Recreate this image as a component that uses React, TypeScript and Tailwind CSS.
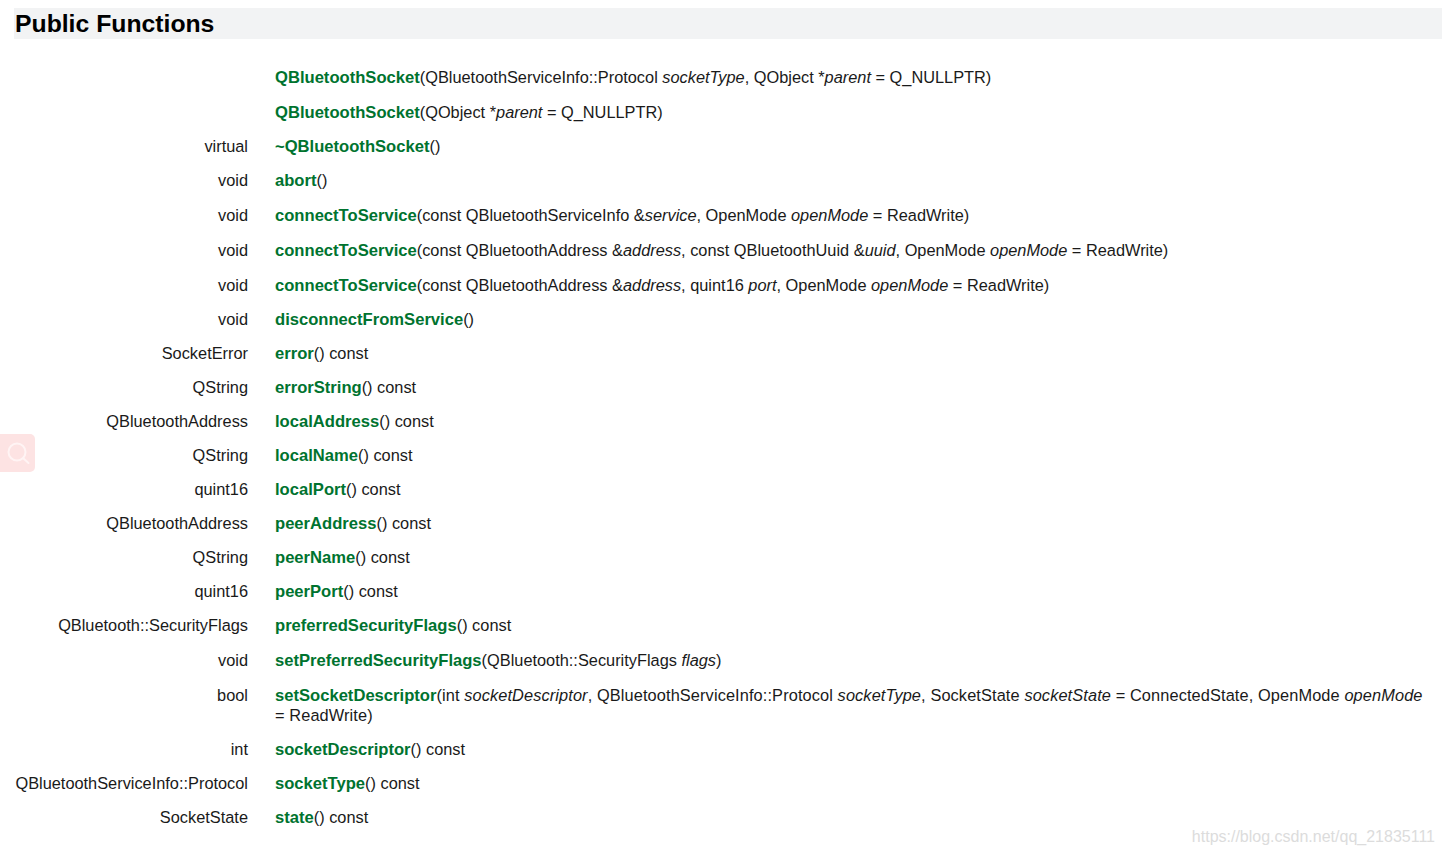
import React from 'react'

type Row = { type?: string; name: string; rest: React.ReactNode; tall?: boolean; wide?: boolean }

const rows: Row[] = [
  { name: 'QBluetoothSocket', tall: true, rest: <>(QBluetoothServiceInfo::Protocol <i>socketType</i>, QObject *<i>parent</i> = Q_NULLPTR)</> },
  { name: 'QBluetoothSocket', rest: <>(QObject *<i>parent</i> = Q_NULLPTR)</> },
  { type: 'virtual', name: '~QBluetoothSocket', rest: '()' },
  { type: 'void', name: 'abort', tall: true, rest: '()' },
  { type: 'void', name: 'connectToService', tall: true, rest: <>(const QBluetoothServiceInfo &amp;<i>service</i>, OpenMode <i>openMode</i> = ReadWrite)</> },
  { type: 'void', name: 'connectToService', tall: true, rest: <>(const QBluetoothAddress &amp;<i>address</i>, const QBluetoothUuid &amp;<i>uuid</i>, OpenMode <i>openMode</i> = ReadWrite)</> },
  { type: 'void', name: 'connectToService', rest: <>(const QBluetoothAddress &amp;<i>address</i>, quint16 <i>port</i>, OpenMode <i>openMode</i> = ReadWrite)</> },
  { type: 'void', name: 'disconnectFromService', rest: '()' },
  { type: 'SocketError', name: 'error', rest: '() const' },
  { type: 'QString', name: 'errorString', rest: '() const' },
  { type: 'QBluetoothAddress', name: 'localAddress', rest: '() const' },
  { type: 'QString', name: 'localName', rest: '() const' },
  { type: 'quint16', name: 'localPort', rest: '() const' },
  { type: 'QBluetoothAddress', name: 'peerAddress', rest: '() const' },
  { type: 'QString', name: 'peerName', rest: '() const' },
  { type: 'quint16', name: 'peerPort', rest: '() const' },
  { type: 'QBluetooth::SecurityFlags', name: 'preferredSecurityFlags', tall: true, rest: '() const' },
  { type: 'void', name: 'setPreferredSecurityFlags', tall: true, rest: <>(QBluetooth::SecurityFlags <i>flags</i>)</> },
  { type: 'bool', name: 'setSocketDescriptor', wide: true, rest: <>(int <i>socketDescriptor</i>, QBluetoothServiceInfo::Protocol <i>socketType</i>, SocketState <i>socketState</i> = ConnectedState, OpenMode <i>openMode</i> = ReadWrite)</> },
  { type: 'int', name: 'socketDescriptor', rest: '() const' },
  { type: 'QBluetoothServiceInfo::Protocol', name: 'socketType', rest: '() const' },
  { type: 'SocketState', name: 'state', rest: '() const' },
]

export default function App() {
  return (
    <div className="relative h-[855px] overflow-hidden bg-white font-['Liberation_Sans',Arial,sans-serif] text-[16.35px] leading-[20px] text-[#1a1a1a]">
      <div className="pl-[14px] pt-[8px]">
        <h2 className="h-[31px] bg-[#f2f3f4] pl-px text-[24.75px] font-bold leading-[31px] text-black">Public Functions</h2>
      </div>
      <div className="pt-[21px]">
        {rows.map((r, i) => (
          <div key={i} className={`flex ${r.tall ? 'pb-[8px]' : 'pb-[7px]'} pt-[7px]`}>
            <div className="w-[248px] shrink-0 text-right">{r.type}</div>
            <div className={`ml-[27px] w-[1155px] ${r.wide ? 'tracking-[0.11px]' : ''}`}>
              <span className="text-[16.6px] font-bold leading-none tracking-normal text-[#00732f]">{r.name}</span>
              {r.rest}
            </div>
          </div>
        ))}
      </div>
      {/* floating search tab and watermark */}
      <div className="absolute left-0 top-[434px] flex h-[38px] w-[35px] items-center justify-center rounded-r-[5px] bg-[#fde3e3]">
        <svg width="26" height="26" viewBox="0 0 26 26" fill="none" stroke="#fff4f4" strokeWidth="2">
          <circle cx="12" cy="12" r="8.5" />
          <path d="M18.5 18.5l5 4.5" strokeLinecap="round" />
        </svg>
      </div>
      <div className="absolute right-[7px] top-[827px] text-[16px] text-[#dcdcdc]">https://blog.csdn.net/qq_21835111</div>
    </div>
  )
}
